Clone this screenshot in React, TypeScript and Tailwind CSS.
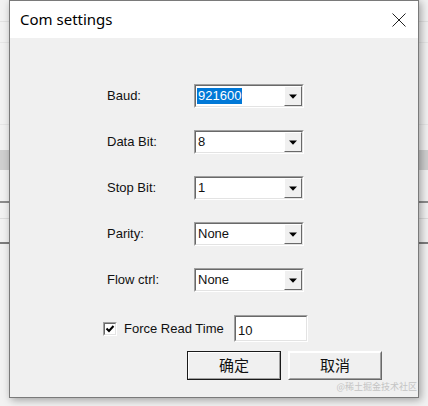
import type { ReactNode } from "react";

const fields = [
    { label: "Baud:", value: "921600", selected: true },
    { label: "Data Bit:", value: "8" },
    { label: "Stop Bit:", value: "1" },
    { label: "Parity:", value: "None" },
    { label: "Flow ctrl:", value: "None" },
];

// sunken 3D edge used by combos, edits and checkbox
const Sunken = ({ className, children }: { className?: string; children: ReactNode }) => (
    <div className={"border border-t-[#a0a0a0] border-l-[#a0a0a0] border-b-white border-r-white " + (className ?? "")}>
        <div className="flex h-full w-full border border-t-[#696969] border-l-[#696969] border-b-[#e3e3e3] border-r-[#e3e3e3] bg-white">
            {children}
        </div>
    </div>
);

const Combo = ({ value, selected }: { value: string; selected?: boolean }) => (
    <Sunken className="h-[24px] w-[110px]">
        <div className="flex flex-1 items-center pl-[1px]">
            <span className={selected ? "bg-[#0078d7] px-[1px] leading-[16px] text-white" : "px-[1px] leading-[16px]"}>
                {value}
            </span>
        </div>
        <div className="flex w-[18px] items-center justify-center border border-t-white border-l-white border-b-[#696969] border-r-[#696969] bg-[#f0f0f0]">
            <svg width="8" height="5" viewBox="0 0 8 5">
                <path d="M0 0.5h8L4 4.8z" fill="#000" />
            </svg>
        </div>
    </Sunken>
);

const Button = ({ text, isDefault }: { text: string; isDefault?: boolean }) => (
    <div className={isDefault ? "border border-[#1a1a1a]" : "border border-t-white border-l-white border-b-[#696969] border-r-[#696969]"}>
        <div className="flex h-[27px] w-[92px] items-center justify-center border border-t-white border-l-white border-b-[#a0a0a0] border-r-[#a0a0a0] bg-[#f0f0f0] text-[15px] text-[#111] [font-family:'Noto_Sans_CJK_SC',sans-serif]">
            {text}
        </div>
    </div>
);

export default function App() {
    return (
        <div className="relative h-[406px] w-[428px] overflow-hidden bg-[#f2f2f2]">
            {/* table behind the dialog */}
            <div className="flex flex-col">
                <div className="h-[22px] border-b border-[#e2e2e2]" />
                <div className="h-[21px] border-b border-[#e6e6e6]" />
                <div className="h-[82px] border-b border-[#e6e6e6]" />
                <div className="h-[25px]" />
                <div className="h-[20px] bg-[#cfcfcf]" />
                <div className="h-[33px] border-b-2 border-[#8c8c8c]" />
                <div className="h-[16px] border-b border-[#dcdcdc]" />
                <div className="h-[25px] border-b-2 border-[#7d7d7d]" />
            </div>

            {/* dialog */}
            <div className="absolute left-[9px] top-0 flex h-[398px] w-[410px] flex-col border border-[#7a7a7a] bg-white shadow-[2px_2px_8px_rgba(0,0,0,0.35)] [font-family:'Liberation_Sans',Arial,sans-serif]">
                <div className="flex h-[37px] shrink-0 items-center justify-between pl-[10px] pr-[12px]">
                    <span className="text-[15px] text-black [font-family:'Noto_Sans',sans-serif]">Com settings</span>
                    <svg width="14" height="14" viewBox="0 0 14 14">
                        <path d="M0.5 0.5l13 13M13.5 0.5l-13 13" stroke="#222" strokeWidth="1" />
                    </svg>
                </div>

                <div className="relative flex flex-1 flex-col bg-[#f0f0f0] pt-[46px] text-[13px] text-[#111]">
                    <div className="flex flex-col gap-[22px] pl-[97px]">
                        {fields.map((f) => (
                            <div key={f.label} className="flex items-center">
                                <span className="w-[87px]">{f.label}</span>
                                <Combo value={f.value} selected={f.selected} />
                            </div>
                        ))}
                    </div>

                    <div className="mt-[23px] flex items-center pl-[93px]">
                        <Sunken className="h-[14px] w-[14px]">
                            <svg width="10" height="10" viewBox="0 0 10 10">
                                <path d="M1.5 4.5l2.5 2.5 4.5-5" stroke="#000" strokeWidth="2" fill="none" />
                            </svg>
                        </Sunken>
                        <span className="ml-[7px] w-[110px]">Force Read Time</span>
                        <Sunken className="h-[27px] w-[74px]">
                            <span className="pl-[2px] pt-[4px]">10</span>
                        </Sunken>
                    </div>

                    <div className="mt-[9px] flex gap-[7px] pl-[177px]">
                        <Button text="确定" isDefault />
                        <Button text="取消" />
                    </div>

                    <span className="absolute bottom-[4px] right-[1px] text-[9px] text-[#c4c4c4] [font-family:'Noto_Sans_CJK_SC',sans-serif]">
                        @稀土掘金技术社区
                    </span>
                </div>
            </div>
        </div>
    );
}
